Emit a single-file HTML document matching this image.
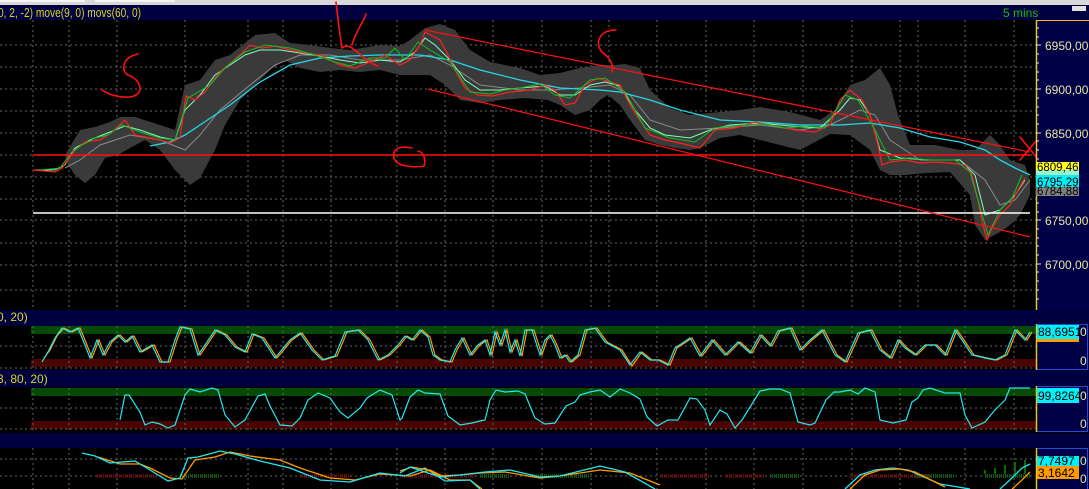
<!DOCTYPE html>
<html><head><meta charset="utf-8"><style>
html,body{margin:0;padding:0;background:#000;width:1089px;height:489px;overflow:hidden;font-family:"Liberation Sans",sans-serif}
svg{display:block}
</style></head><body>
<svg width="1089" height="489" viewBox="0 0 1089 489" xmlns="http://www.w3.org/2000/svg" font-family="Liberation Sans, sans-serif">
<rect width="1089" height="489" fill="#000"/>
<rect x="0" y="0" width="1089" height="5" fill="#d8d8d8"/>
<rect x="0" y="0" width="85" height="2" fill="#f4f4f4"/><rect x="95" y="0" width="80" height="2" fill="#f4f4f4"/>
<rect x="0" y="5" width="1089" height="15" fill="#000040"/>
<text x="-2" y="17" font-size="13" fill="#d8d820" textLength="143" lengthAdjust="spacingAndGlyphs">0, 2, -2) move(9, 0) movs(60, 0)</text>
<text x="1003" y="17" font-size="12" fill="#10c010">5 mins</text>
<rect x="1072" y="6" width="14" height="5" fill="#e0e0e0"/>

<g stroke="#666" stroke-dasharray="2,3" stroke-width="1">
<path d="M33 20V310M69 20V310M117 20V310M185 20V310M248 20V310M283 20V310M331 20V310M397 20V310M445 20V310M493 20V310M542 20V310M591 20V310M609 20V310M657 20V310M706 20V310M754 20V310M803 20V310M852 20V310M900 20V310M918 20V310M965 20V310M1014 20V310"/>
<path d="M0 45H1036M0 67H1036M0 89H1036M0 111H1036M0 133H1036M0 155H1036M0 177H1036M0 199H1036M0 220H1036M0 243H1036M0 265H1036M0 290H1036"/>
</g>
<path fill="#3a3a3a" d="M65 155 L80 130 L95 127 L110 122 L120 117 L135 117 L160 125 L175 130 L185 85 L200 80 L215 60 L230 55 L255 35 L275 33 L290 43 L310 45 L330 48 L350 50 L380 45 L400 46 L410 40 L425 28 L440 24 L455 30 L470 50 L490 62 L520 68 L540 75 L560 73 L580 68 L600 65 L615 65 L625 64 L640 68 L650 90 L670 108 L690 115 L720 112 L740 110 L760 107 L790 112 L820 120 L835 110 L850 85 L865 80 L880 68 L890 85 L898 115 L910 145 L935 145 L960 150 L975 150 L990 135 L1000 145 L1010 160 L1025 165 L1030 180 L1030 195 L1020 215 L1010 225 L1000 232 L985 240 L975 225 L970 195 L950 172 L925 173 L905 175 L890 175 L880 170 L870 150 L850 135 L830 134 L800 150 L780 145 L760 140 L740 135 L720 138 L700 148 L690 150 L675 148 L660 145 L645 140 L630 120 L620 105 L608 95 L600 100 L590 110 L575 115 L560 105 L548 100 L525 98 L500 100 L480 103 L460 100 L445 85 L430 75 L420 75 L400 75 L380 70 L360 72 L340 70 L320 72 L300 68 L285 60 L270 70 L255 85 L240 100 L225 125 L215 150 L200 178 L190 185 L185 180 L175 170 L160 150 L145 140 L130 148 L118 155 L105 158 L95 175 L85 183 L75 175 L68 165 Z"/>
<polyline fill="none" stroke="#8a8a8a" stroke-width="1" points="65,168 80,160 100,145 130,135 160,140 185,150 200,135 220,110 250,85 275,65 300,55 330,55 360,60 400,60 430,55 450,65 480,85 520,90 550,90 580,88 610,85 630,95 650,120 680,130 720,128 760,125 800,130 830,125 860,110 875,115 890,140 920,160 960,160 985,180 1000,205 1015,200 1030,180"/>
<polyline fill="none" stroke="#22d8e8" stroke-width="1.3" points="150,146 170,142 185,135 200,125 230,105 260,82 290,65 320,58 350,56 380,55 420,55 450,60 480,70 520,80 560,88 600,90 620,92 650,100 680,110 720,120 760,122 800,125 840,125 870,123 900,128 930,137 960,142 985,150 1000,160 1015,168 1030,175"/>
<polyline fill="none" stroke="#80ffc0" stroke-width="1" points="33,170 55,170 65,165 75,148 90,140 110,132 125,126 140,130 160,137 175,140 185,110 200,95 215,75 230,65 245,55 260,50 280,50 300,53 320,56 340,60 360,63 380,60 400,62 415,52 425,38 435,45 450,60 465,80 480,90 500,90 520,88 545,86 560,95 575,95 590,85 605,82 620,86 635,110 650,128 665,135 690,138 710,130 730,125 760,123 790,126 820,128 840,110 850,98 860,100 870,115 880,150 900,158 930,160 960,160 975,175 985,215 1000,210 1015,195 1025,180"/>
<g stroke-width="1.2">
<polyline fill="none" stroke="#ff2020" points="33,170 45,171 55,172 62,168 75,150 85,142 100,140 112,132 125,120 135,135 150,138 160,140 170,143 180,138 186,96 195,100 205,92 215,78 222,70 232,62 240,55 250,45 262,48 275,46 290,50 305,53 320,55 340,65 355,68 370,62 385,55 400,65 410,60 420,45 425,32 440,40 448,55 455,70 465,88 478,95 492,96 510,92 530,90 545,85 555,90 565,105 575,103 585,85 598,78 610,82 620,85 630,105 640,120 650,135 665,140 680,143 700,148 715,130 735,128 755,122 775,126 795,130 815,132 830,125 840,100 850,90 862,100 870,115 878,145 882,165 890,162 905,160 920,163 935,162 950,163 965,165 972,175 978,200 983,225 987,240 992,228 1000,215 1010,205 1018,190 1025,178"/>
<polyline fill="none" stroke="#10c020" stroke-width="1" points="40,170 60,168 72,152 82,145 95,138 108,135 122,125 140,132 160,138 175,140 188,98 210,85 225,68 245,52 265,45 290,48 315,55 335,62 350,66 370,58 385,58 395,48 405,60 418,42 430,50 450,62 470,92 490,94 505,90 520,88 540,84 555,95 570,98 590,80 605,78 625,92 645,128 670,138 695,142 715,128 740,125 765,124 785,128 805,126 825,128 845,95 858,100 875,130 890,160 910,158 930,160 955,160 970,172 988,235 1000,210 1012,198 1022,175"/>
</g>
<line x1="33" y1="155" x2="1030" y2="155" stroke="#ff1010" stroke-width="1.5"/>
<line x1="33" y1="213" x2="1030" y2="213" stroke="#ffffff" stroke-width="1.5"/>
<line x1="425" y1="30" x2="1030" y2="152" stroke="#ff1010" stroke-width="1.2"/>
<line x1="428" y1="89" x2="1030" y2="237" stroke="#ff1010" stroke-width="1.2"/>
<g fill="none" stroke="#ff1010" stroke-width="1.6" stroke-linecap="round">
<path d="M138 54 C120 58,122 72,128 75 C142 80,145 95,130 97 C118 98,108 94,102 90"/>
<path d="M336 2 C338 20,340 35,342 48 M352 45 C356 30,364 22,366 14 M342 48 C352 40,360 60,378 66"/>
<path d="M412 148 C398 145,392 150,394 158 C396 166,412 168,424 166 C426 160,424 152,418 151"/>
<path d="M616 30 C600 30,594 42,602 52 C610 58,614 64,612 72"/>
<path d="M1020 137 L1037 158 M1037 140 L1020 160"/>
</g>

<rect x="1036" y="20" width="53" height="290" fill="#000048"/>
<line x1="1036.5" y1="20" x2="1036.5" y2="310" stroke="#f0c020" stroke-width="1.5"/>
<line x1="1036" y1="20.5" x2="1089" y2="20.5" stroke="#f0c020"/>
<g stroke="#e0e0e0" stroke-width="1">
<path d="M1036 28h3M1036 37h3M1036 45h5M1036 54h3M1036 63h3M1036 72h3M1036 80h3M1036 89h5M1036 98h3M1036 107h3M1036 115h3M1036 124h3M1036 133h5M1036 141h3M1036 150h3M1036 159h3M1036 168h3M1036 177h5M1036 185h3M1036 194h3M1036 203h3M1036 212h3M1036 220h5M1036 229h3M1036 238h3M1036 246h3M1036 255h3M1036 264h5M1036 272h3M1036 281h3M1036 290h3M1036 299h3"/>
</g>
<g font-size="12" fill="#e8e8a0">
<text x="1045" y="50">6950,00</text><text x="1045" y="94">6900,00</text><text x="1045" y="138">6850,00</text><text x="1045" y="225">6750,00</text><text x="1045" y="269">6700,00</text>
</g>
<rect x="1036" y="162" width="43" height="9" fill="#ffff20"/>
<rect x="1036" y="170" width="43" height="8" fill="#a0f0c8"/>
<rect x="1036" y="185" width="43" height="11" fill="#808080"/>
<rect x="1036" y="175" width="43" height="12" fill="#00f0f8"/>
<g font-size="11.5" fill="#000">
<text x="1037" y="171">6809,46</text><text x="1037" y="195">6784,88</text><text x="1037" y="186">6795,29</text>
</g>

<rect x="0" y="310" width="1089" height="16" fill="#000040"/>
<text x="-3" y="321" font-size="12" fill="#d8d820">0, 20)</text>
<rect x="31" y="326" width="1005" height="8" fill="#064a06"/>
<rect x="31" y="359" width="1005" height="8" fill="#4a0404"/>
<g stroke="#666" stroke-dasharray="2,3"><path d="M0 368H1036M0 346H1036M33 326V368M69 326V368M117 326V368M185 326V368M248 326V368M283 326V368M331 326V368M397 326V368M445 326V368M493 326V368M542 326V368M591 326V368M657 326V368M706 326V368M754 326V368M803 326V368M852 326V368M900 326V368M965 326V368M1014 326V368"/></g>
<polyline fill="none" stroke="#ff9a00" stroke-width="1.2" points="44,358 50,350 57,336 64,328 72,332 80,328 87,345 92,358 99,340 105,355 112,342 120,335 127,342 134,336 142,352 154,345 162,362 170,362 177,340 182,327 192,329 200,355 207,345 217,330 227,335 237,347 247,352 254,334 264,338 277,358 292,340 302,333 314,350 324,360 337,356 347,332 360,330 370,340 380,360 390,355 400,345 407,336 414,340 422,330 430,337 435,355 442,360 452,362 457,350 464,338 472,355 480,345 487,340 492,355 497,332 502,345 507,330 512,352 517,340 522,356 527,330 534,330 542,355 547,340 552,335 557,345 562,358 567,355 572,362 580,355 587,330 597,328 607,342 622,350 632,366 642,352 652,360 660,360 670,365 677,348 692,338 702,356 714,340 727,355 740,342 752,353 762,335 772,346 780,331 792,328 802,350 812,340 824,330 837,355 847,362 860,333 872,330 882,350 892,358 900,340 907,348 917,355 927,345 937,345 947,355 957,330 964,340 974,355 987,358 997,360 1007,355 1017,330 1027,340 1032,332"/>
<polyline fill="none" stroke="#20e8f0" stroke-width="1.2" points="42,362 48,352 55,338 62,328 70,332 78,328 85,345 90,358 97,340 103,355 110,342 118,335 125,342 132,336 140,352 152,345 160,362 168,362 175,340 180,327 190,329 198,355 205,345 215,330 225,335 235,347 245,352 252,334 262,338 275,358 290,340 300,333 312,350 322,360 335,356 345,332 358,330 368,340 378,360 388,355 398,345 405,336 412,340 420,330 428,337 433,355 440,360 450,362 455,350 462,338 470,355 478,345 485,340 490,355 495,332 500,345 505,330 510,352 515,340 520,356 525,330 532,330 540,355 545,340 550,335 555,345 560,358 565,355 570,362 578,355 585,330 595,328 605,342 620,350 630,365 640,352 650,360 658,360 668,365 675,348 690,338 700,356 712,340 725,355 738,342 750,353 760,335 770,346 778,331 790,328 800,350 810,340 822,330 835,355 845,362 858,333 870,330 880,350 890,358 898,340 905,348 915,355 925,345 935,345 945,355 955,330 962,340 972,355 985,358 995,360 1005,355 1015,330 1025,340 1030,332"/>
<rect x="1036" y="324" width="53" height="46" fill="#000048"/>
<rect x="1036.5" y="324.5" width="51" height="45" fill="none" stroke="#2050d0"/>
<line x1="1036.5" y1="324" x2="1036.5" y2="370" stroke="#f0c020" stroke-width="1.5"/>
<rect x="1037" y="325" width="42" height="14" fill="#00f0f8"/>
<rect x="1037" y="339" width="42" height="3" fill="#ff9a00"/>
<text x="1038" y="336" font-size="12" fill="#000">88,6951</text>
<text x="1080" y="336" font-size="12" fill="#e8e8a0">0</text>
<text x="1080" y="365" font-size="12" fill="#e8e8a0">0</text>

<rect x="0" y="370" width="1089" height="17" fill="#000040"/>
<text x="-3" y="383" font-size="12" fill="#d8d820">3, 80, 20)</text>
<rect x="31" y="388" width="1005" height="8" fill="#064a06"/>
<rect x="31" y="421" width="1005" height="8" fill="#4a0404"/>
<g stroke="#666" stroke-dasharray="2,3"><path d="M0 429H1036M0 408H1036M33 388V430M69 388V430M117 388V430M185 388V430M248 388V430M283 388V430M331 388V430M397 388V430M445 388V430M493 388V430M542 388V430M591 388V430M657 388V430M706 388V430M754 388V430M803 388V430M852 388V430M900 388V430M965 388V430M1014 388V430"/></g>
<polyline fill="none" stroke="#20e8f0" stroke-width="1.2" points="120,420 125,395 129,395 140,412 145,425 152,422 160,424 168,428 175,425 185,395 190,389 200,392 212,388 218,390 225,415 235,427 245,420 258,396 265,394 270,406 280,425 292,426 300,418 308,400 318,393 330,398 340,412 348,418 360,408 367,398 380,390 392,395 400,420 402,418 410,397 418,390 425,393 440,394 448,416 460,425 472,423 480,421 485,420 490,400 496,390 505,392 518,391 525,394 535,418 545,424 555,423 566,406 575,402 580,395 590,392 600,390 610,397 620,389 630,393 640,399 647,417 657,426 668,420 678,420 690,398 697,399 705,410 710,425 720,410 727,414 735,428 742,420 752,404 760,391 770,389 780,389 790,393 798,422 810,425 815,423 826,400 834,392 840,392 850,390 858,394 865,388 875,392 880,420 893,423 906,420 912,402 918,398 923,390 930,388 945,393 960,393 965,415 972,428 985,422 995,410 1005,400 1010,388 1030,388"/>
<rect x="1036" y="386" width="53" height="46" fill="#000048"/>
<rect x="1036.5" y="386.5" width="51" height="45" fill="none" stroke="#2050d0"/>
<line x1="1036.5" y1="386" x2="1036.5" y2="432" stroke="#f0c020" stroke-width="1.5"/>
<rect x="1037" y="388" width="42" height="15" fill="#00f0f8"/>
<text x="1038" y="400" font-size="12" fill="#000">99,8264</text>
<text x="1080" y="400" font-size="12" fill="#e8e8a0">0</text>
<text x="1080" y="428" font-size="12" fill="#e8e8a0">0</text>

<rect x="0" y="433" width="1089" height="15" fill="#000040"/>
<g stroke="#666" stroke-dasharray="2,3"><path d="M0 459H1036M0 476H1036M33 448V489M69 448V489M117 448V489M185 448V489M248 448V489M283 448V489M331 448V489M397 448V489M445 448V489M493 448V489M542 448V489M591 448V489M657 448V489M706 448V489M754 448V489M803 448V489M852 448V489M900 448V489M965 448V489M1014 448V489"/></g>
<path d="M97 476h60M300 476h50M400 476h75M660 476h50M725 476h40M850 476h40M880 476h50" stroke="#6a0808" stroke-width="4" stroke-dasharray="1,1"/>
<path d="M180 476h40M480 476h30M530 476h60M770 476h30M915 476h40M985 476h45" stroke="#0a5a0a" stroke-width="4" stroke-dasharray="1,1"/>
<path d="M985 474V470M995 474V468M1005 474V465M1015 474V462M1025 474V460" stroke="#0a6a0a" stroke-width="2"/>
<polyline fill="none" stroke="#ff9a00" stroke-width="1.3" points="98,457 120,464 140,464 150,468 170,478 182,479 195,460 215,457 230,452 250,456 280,460 300,468 330,478 355,480 380,474 410,476 430,470 450,480 470,480 482,489"/>
<polyline fill="none" stroke="#20e8f0" stroke-width="1.3" points="82,453 95,456 110,463 135,461 150,470 168,481 180,478 188,458 198,457 220,451 235,454 260,461 290,468 320,480 350,482 380,473 405,476 425,468 445,481 470,480 480,489"/>
<polyline fill="none" stroke="#ff9a00" stroke-width="1.3" points="400,471 412,467 428,470 440,476 460,475 480,473 505,472 540,478 560,476 600,470 630,473 660,485"/>
<polyline fill="none" stroke="#20e8f0" stroke-width="1.3" points="400,473 410,467 425,472 440,477 460,475 485,472 510,470 540,477 560,476 600,466 625,472 655,489"/>
<polyline fill="none" stroke="#20e8f0" stroke-width="1.3" points="845,489 860,475 875,470 893,468 908,470 940,484 970,489"/>
<polyline fill="none" stroke="#ff9a00" stroke-width="1.3" points="850,489 865,475 880,470 900,469 915,472 945,487"/>
<polyline fill="none" stroke="#20e8f0" stroke-width="1.3" points="1000,489 1012,478 1022,468 1030,464"/>
<polyline fill="none" stroke="#ff9a00" stroke-width="1.3" points="1012,489 1022,480 1030,472"/>
<rect x="1036" y="448" width="53" height="41" fill="#000048"/>
<rect x="1036.5" y="448.5" width="51" height="42" fill="none" stroke="#2050d0"/>
<line x1="1036.5" y1="448" x2="1036.5" y2="489" stroke="#f0c020" stroke-width="1.5"/>
<rect x="1037" y="456" width="42" height="10" fill="#00f0f8"/>
<rect x="1037" y="466" width="42" height="13" fill="#ff9a00"/>
<text x="1038" y="465" font-size="12" fill="#000">7,7497</text>
<text x="1038" y="477" font-size="12" fill="#000">3,1642</text>
<text x="1080" y="465" font-size="12" fill="#e8e8a0">0</text>
<text x="1080" y="483" font-size="12" fill="#e8e8a0">0</text>
</svg>
</body></html>
